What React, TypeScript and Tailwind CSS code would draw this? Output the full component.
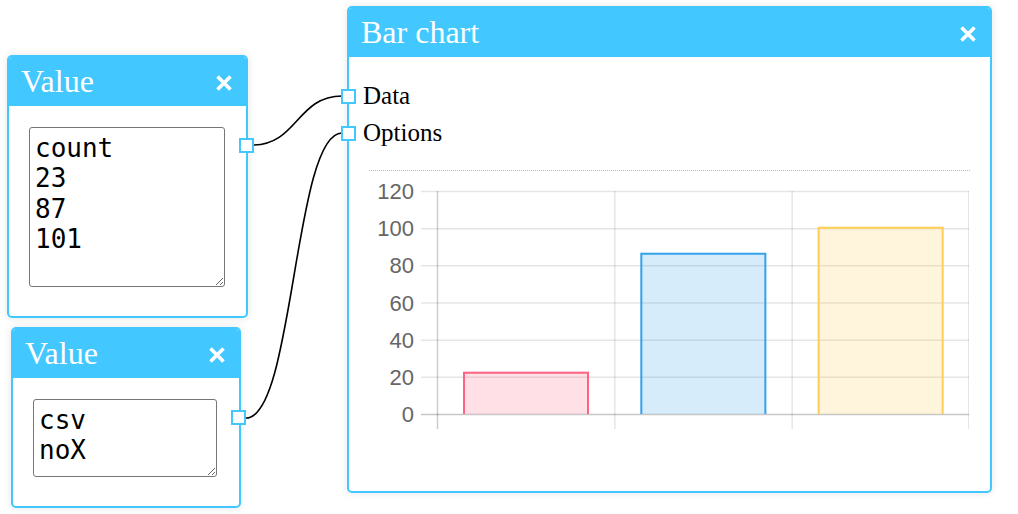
import React from 'react'

const BLUE = 'border-[#42c8ff]'

function CloseIcon() {
  return (
    <svg width="18" height="18" viewBox="0 0 18 18" className="mt-[2px]">
      <path d="M2.5 2.5 L15.5 15.5 M15.5 2.5 L2.5 15.5" stroke="#fff" strokeWidth="3.6" strokeLinecap="butt" />
    </svg>
  )
}

function Port({ className }: { className: string }) {
  return <div className={`absolute w-[15px] h-[15px] bg-white border-2 ${BLUE} ${className}`} />
}

function NodeHeader({ title }: { title: string }) {
  return (
    <div className="h-[49px] bg-[#42c8ff] flex items-center justify-between pl-[12px] pr-[13px] rounded-t-[3px]">
      <span className="text-white text-[32px] leading-[1.15]" style={{ fontFamily: '"Liberation Serif", "Times New Roman", serif' }}>
        {title}
      </span>
      <CloseIcon />
    </div>
  )
}

function ValueNode({
  className,
  lines,
  boxClass,
  portClass,
}: {
  className: string
  lines: string[]
  boxClass: string
  portClass: string
}) {
  return (
    <div className={`absolute bg-white border-2 ${BLUE} rounded-[5px] shadow-[0_0_8px_rgba(0,0,0,0.1)] ${className}`}>
      <NodeHeader title="Value" />
      <div className="pt-[21px] pl-[20px]">
        <textarea
          spellCheck={false}
          defaultValue={lines.join('\n')}
          className={`block bg-white text-black border border-[#767676] rounded-[3px] px-[5px] pt-[5px] text-[26px] leading-[1.17] outline-none ${boxClass}`}
          style={{ fontFamily: '"DejaVu Sans Mono", monospace' }}
        />
      </div>
      <Port className={portClass} />
    </div>
  )
}

const values = [23, 87, 101]
const bars = [
  { fill: 'rgba(255,99,132,0.2)', stroke: 'rgb(255,99,132)' },
  { fill: 'rgba(54,162,235,0.2)', stroke: 'rgb(54,162,235)' },
  { fill: 'rgba(255,206,86,0.2)', stroke: 'rgb(255,206,86)' },
]

function Chart() {
  const top = 20
  const zero = 243
  const step = (zero - top) / 6
  const y = (v: number) => zero - (v / 20) * step
  const ticks = [120, 100, 80, 60, 40, 20, 0]
  const axisX = 68
  const catW = (600 - axisX) / 3
  return (
    <svg width="600" height="270" className="block" style={{ fontFamily: '"Liberation Sans", Arial, sans-serif' }}>
      {ticks.map((t) => (
        <g key={t}>
          <line
            x1={52}
            x2={600}
            y1={y(t) + 0.5}
            y2={y(t) + 0.5}
            stroke={t === 0 ? 'rgba(0,0,0,0.22)' : 'rgba(0,0,0,0.1)'}
            strokeWidth="1.5"
          />
          <text x={45} y={y(t) + 8} textAnchor="end" fontSize="22" fill="#666">
            {t}
          </text>
        </g>
      ))}
      {[0, 1, 2, 3].map((i) => {
        const x = axisX + i * catW - (i === 3 ? 0.8 : 0) + 0.5
        return (
          <line
            key={i}
            x1={x}
            x2={x}
            y1={top}
            y2={258}
            stroke={i === 0 ? 'rgba(0,0,0,0.2)' : 'rgba(0,0,0,0.1)'}
            strokeWidth="1.5"
          />
        )
      })}
      {values.map((v, i) => {
        const bx = axisX + i * catW + 26
        const bw = 126
        const by = y(v) + 0.5
        return (
          <g key={i}>
            <rect x={bx} y={by} width={bw} height={zero - by} fill={bars[i].fill} />
            <path
              d={`M${bx + 1} ${zero} V${by + 1} H${bx + bw - 1} V${zero}`}
              fill="none"
              stroke={bars[i].stroke}
              strokeWidth="2"
            />
          </g>
        )
      })}
    </svg>
  )
}

export default function App() {
  return (
    <div className="relative w-[1018px] h-[514px] bg-white overflow-hidden">
      {/* Wires */}
      <svg className="absolute inset-0" width="1018" height="514">
        <path d="M253 145 C 297 145, 297 96, 342 96" fill="none" stroke="#000" strokeWidth="1.6" />
        <path d="M246 418 C 294 418, 294 133, 342 133" fill="none" stroke="#000" strokeWidth="1.6" />
      </svg>

      <ValueNode
        className="left-[7px] top-[55px] w-[241px] h-[263px]"
        lines={['count', '23', '87', '101']}
        boxClass="w-[196px] h-[160px]"
        portClass="left-[230px] top-[81px]"
      />
      <ValueNode
        className="left-[11px] top-[327px] w-[230px] h-[181px]"
        lines={['csv', 'noX']}
        boxClass="w-[184px] h-[78px]"
        portClass="left-[218px] top-[81px]"
      />

      {/* Bar chart node */}
      <div className={`absolute left-[347px] top-[6px] w-[645px] h-[487px] bg-white border-2 ${BLUE} rounded-[5px] shadow-[0_0_8px_rgba(0,0,0,0.1)]`}>
        <NodeHeader title="Bar chart" />
        <div className="pt-[20px] pl-[14px] text-[25px] text-black" style={{ fontFamily: '"Liberation Serif", "Times New Roman", serif' }}>
          <div className="h-[37px] flex items-center">Data</div>
          <div className="h-[37px] flex items-center">Options</div>
        </div>
        <div className="mx-[20px] mt-[19px] border-t border-dotted border-[#b8b8b8]" />
        <div className="mx-[20px]">
          <Chart />
        </div>
        <Port className="left-[-8px] top-[81px]" />
        <Port className="left-[-8px] top-[118px]" />
      </div>
    </div>
  )
}
